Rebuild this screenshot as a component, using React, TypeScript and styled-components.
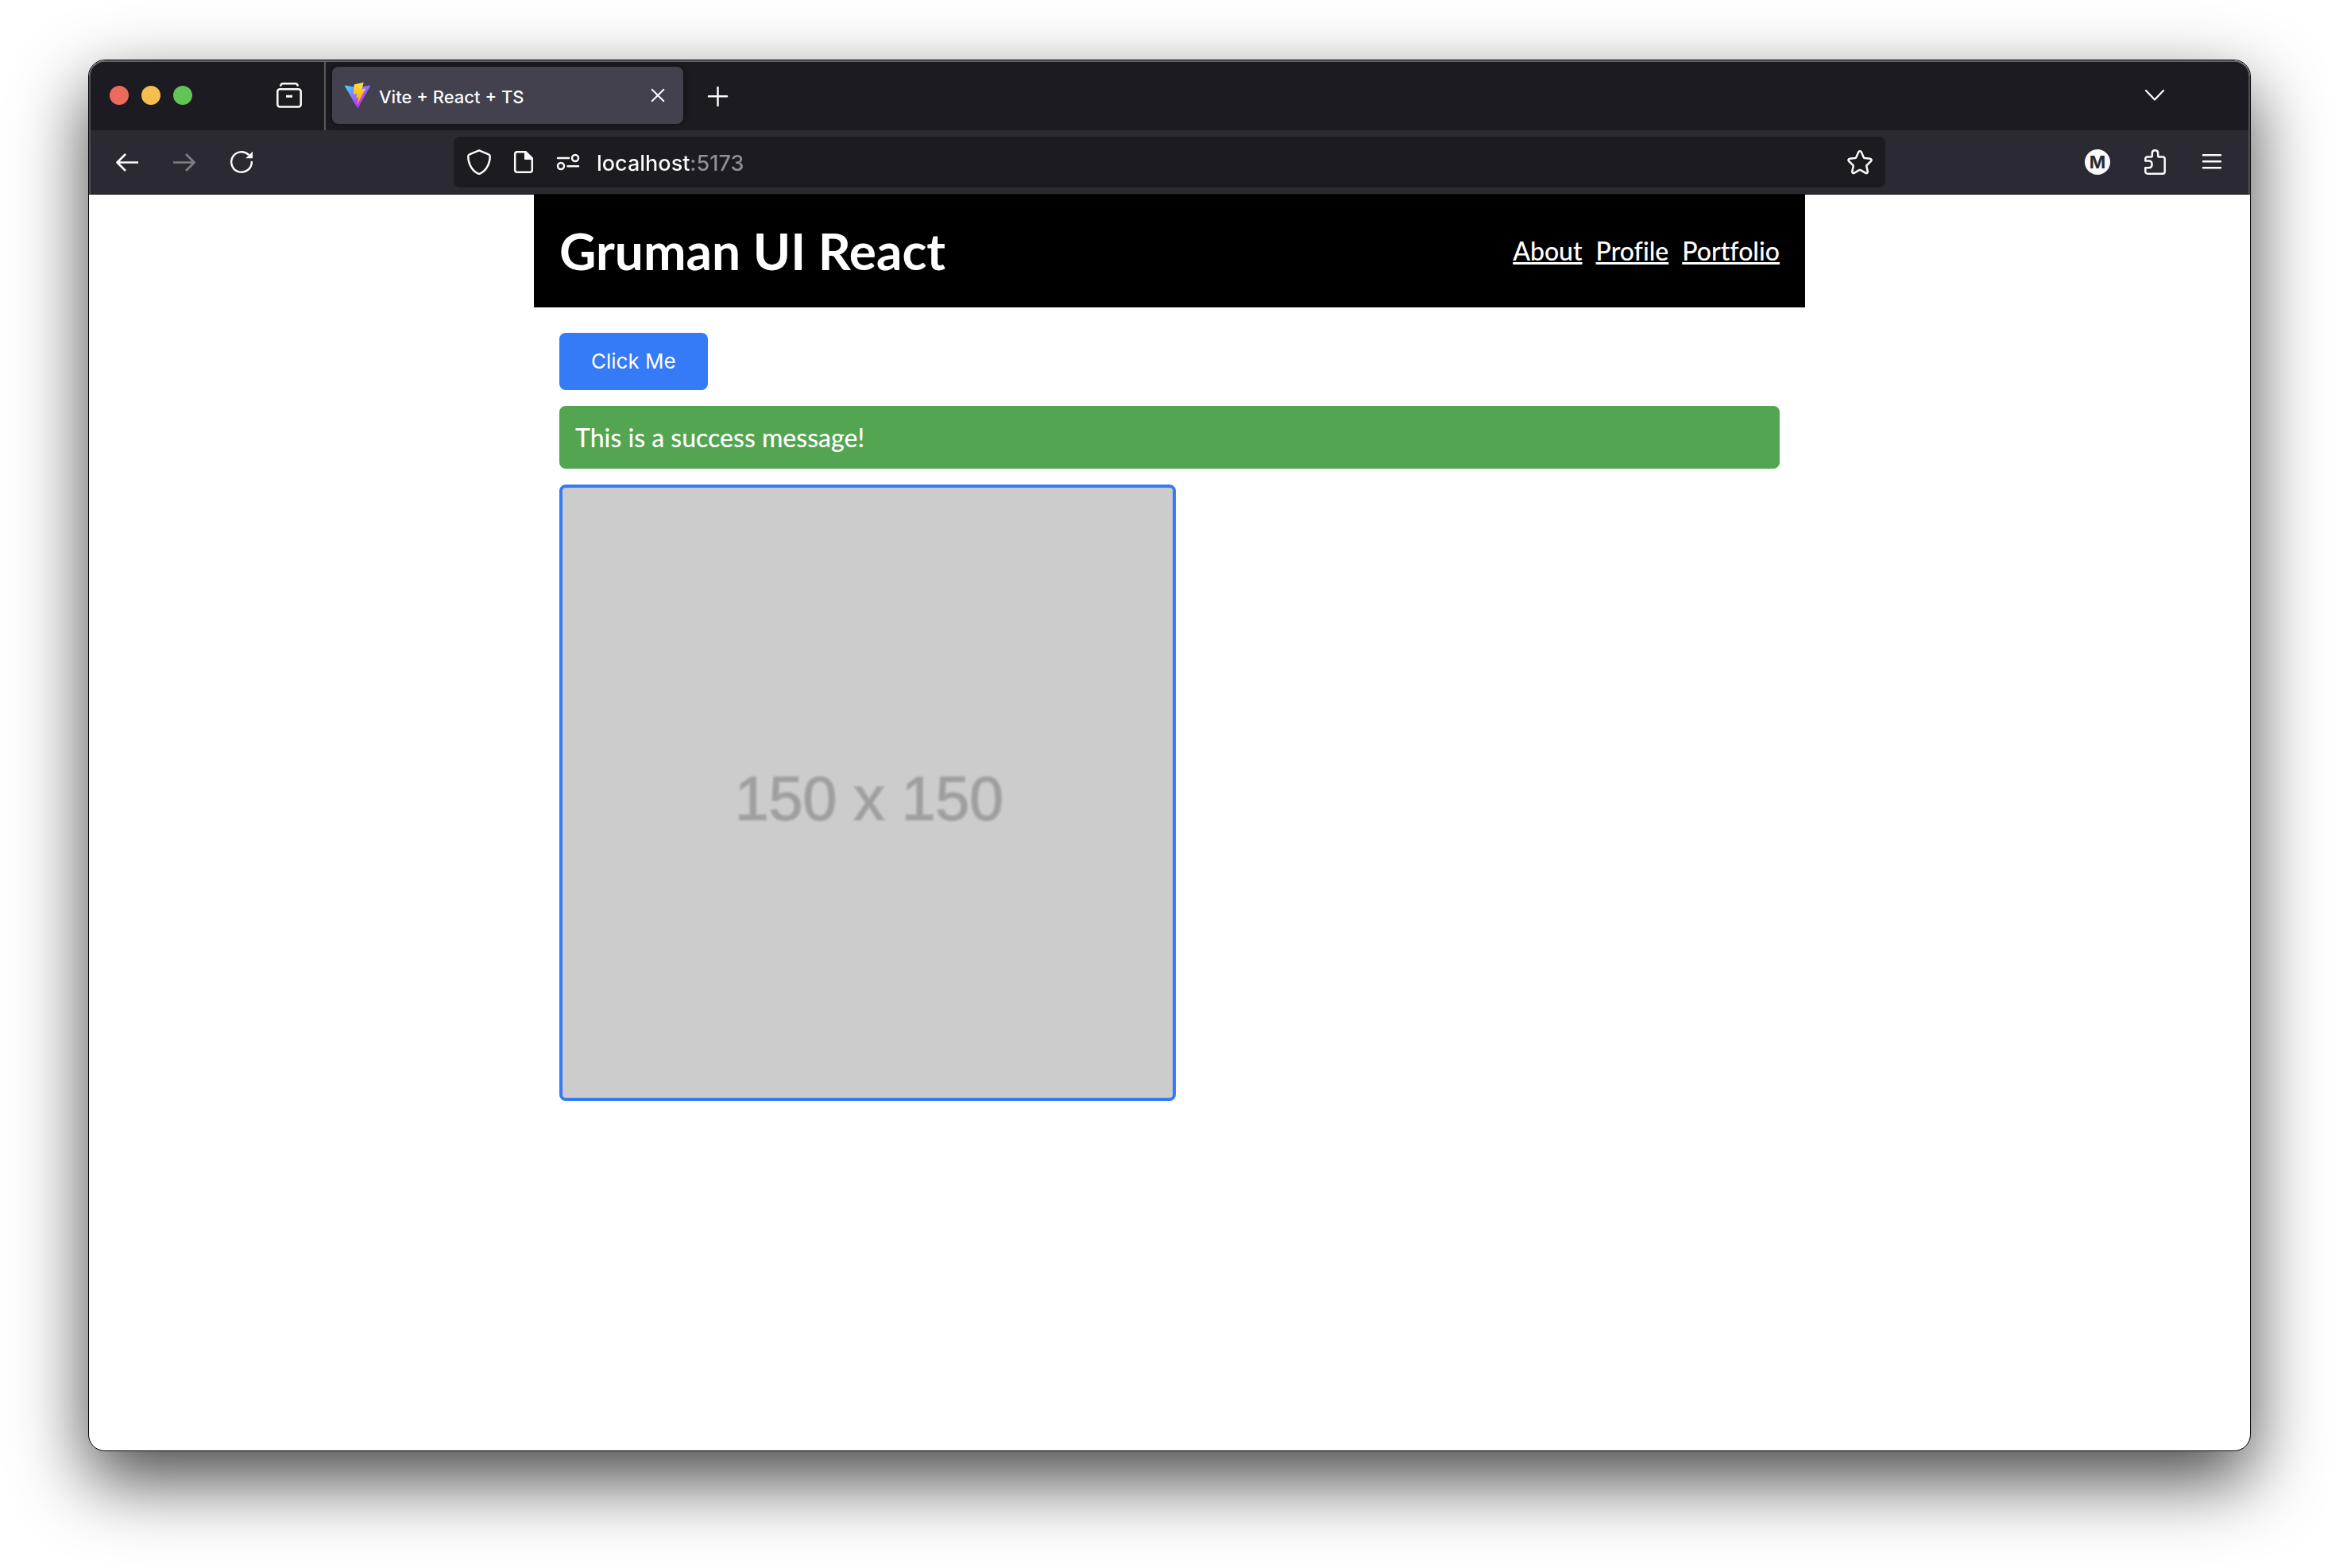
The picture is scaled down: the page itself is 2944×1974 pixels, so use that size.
import React from "react";
import styled, { createGlobalStyle } from "styled-components";

const colors = {
  frame: "#1c1b22",
  toolbar: "#2b2a33",
  tab: "#42414d",
  icon: "#fbfbfe",
  muted: "#8f8f94",
  blue: "#357af6",
  green: "#53a551",
};

const uiFont = `Inter, "Liberation Sans", sans-serif`;

const GlobalStyle = createGlobalStyle`
  *, *::before, *::after { box-sizing: border-box; }
  body { margin: 0; background: #fff; font-family: Lato, "Liberation Sans", sans-serif; }
`;

const Desktop = styled.div`
  min-height: 100vh;
  padding: 75px 111px 147px;
  display: flex;
  flex-direction: column;
`;

const Window = styled.div`
  flex: 1;
  display: flex;
  flex-direction: column;
  overflow: hidden;
  background: #fff;
  border: 1px solid #000;
  border-radius: 21px;
  box-shadow: 0 36px 90px rgba(0, 0, 0, 0.72);
`;

const Chrome = styled.header`
  background: ${colors.toolbar};
  border-style: solid;
  border-width: 2px 2px 1px;
  border-color: #67676b #4f4e54 #0c0c0d;
  border-radius: 20px 20px 0 0;
  font-family: ${uiFont};
  color: ${colors.icon};
`;

const TabStrip = styled.div`
  display: flex;
  align-items: center;
  height: 86px;
  padding: 0 82px 2px 24px;
  background: ${colors.frame};
  border-radius: 18px 18px 0 0;
`;

const WindowControls = styled.div`
  display: flex;
  gap: 16px;
  margin-right: 86px;
`;

const WindowControl = styled.button<{ $color: string }>`
  width: 24px;
  height: 24px;
  padding: 0;
  border: 0;
  border-radius: 50%;
  background: ${(p) => p.$color};
`;

const IconButton = styled.button<{ $width?: number }>`
  display: flex;
  align-items: center;
  justify-content: center;
  flex: none;
  width: ${(p) => p.$width ?? 72}px;
  height: 64px;
  padding: 0;
  border: 0;
  background: transparent;
  color: ${colors.icon};

  &:disabled {
    color: #807f85;
  }
`;

const Divider = styled.div`
  align-self: stretch;
  width: 2px;
  margin: 0 8px -2px;
  background: #5a5960;
`;

const Tab = styled.div`
  display: flex;
  align-items: center;
  width: 442px;
  height: 72px;
  margin-right: 8px;
  padding: 0 4px 0 16px;
  border-radius: 8px;
  background: ${colors.tab};
  box-shadow: 0 0 8px rgba(0, 0, 0, 0.5);
`;

const TabTitle = styled.span`
  flex: 1;
  padding: 4px 0 0 11px;
  font-size: 22px;
  font-weight: 500;
  line-height: 32px;
`;

const Spacer = styled.div`
  flex: 1;
`;

const Toolbar = styled.div`
  display: grid;
  grid-template-columns: 457px 1fr 457px;
  align-items: center;
  height: 80px;
`;

const ToolbarGroup = styled.div<{ $end?: boolean }>`
  display: flex;
  justify-content: ${(p) => (p.$end ? "flex-end" : "flex-start")};
  padding: 0 10px;
`;

const AddressBar = styled.div`
  display: flex;
  align-items: center;
  height: 64px;
  padding: 0 4px;
  border-radius: 8px;
  background: ${colors.frame};
`;

/* The host is bright and the port is dimmed inside the same text box. */
const AddressInput = styled.input`
  flex: 1;
  min-width: 0;
  height: 40px;
  padding: 0;
  margin: 2px 0 0 8px;
  border: 0;
  outline: 0;
  font-family: ${uiFont};
  font-size: 27px;
  font-weight: 500;
  color: ${colors.icon};
  background: linear-gradient(90deg, ${colors.icon} 117px, ${colors.muted} 117px);
  background-clip: text;
  -webkit-text-fill-color: transparent;
`;

const Avatar = styled.span`
  width: 32px;
  height: 32px;
  border-radius: 50%;
  background: ${colors.icon};
  color: ${colors.toolbar};
  font-family: ${uiFont};
  font-size: 22px;
  font-weight: 700;
  line-height: 32px;
  text-align: center;
`;

const Container = styled.div`
  width: 100%;
  max-width: 1600px;
  margin: 0 auto;
`;

const SiteHeader = styled.div`
  display: flex;
  align-items: center;
  justify-content: space-between;
  padding: 32px;
  background: #000;
  color: #fff;
`;

const SiteTitle = styled.h1`
  margin: 0;
  font-size: 64px;
  font-weight: 700;
  line-height: 78px;
`;

const SiteNav = styled.nav`
  display: flex;
  gap: 17px;
`;

const NavLink = styled.a`
  color: #fff;
  font-size: 32px;
  line-height: 40px;
  font-weight: 500;
  font-variant-ligatures: none;
`;

const Main = styled.main`
  display: flex;
  flex-direction: column;
  align-items: flex-start;
  gap: 20px;
  padding: 32px;
`;

const PrimaryButton = styled.button`
  padding: 20px 40px;
  border: 0;
  border-radius: 8px;
  background: ${colors.blue};
  color: #fff;
  font-family: ${uiFont};
  font-size: 26px;
  line-height: 32px;
`;

const Alert = styled.div`
  align-self: stretch;
  padding: 20px;
  border-radius: 8px;
  background: ${colors.green};
  color: #fff;
  font-size: 32px;
  font-weight: 500;
  line-height: 39px;
`;

const Placeholder = styled.div`
  display: flex;
  align-items: center;
  justify-content: center;
  width: 776px;
  aspect-ratio: 1;
  padding: 14px 0 0 4px;
  border: 4px solid ${colors.blue};
  border-radius: 8px;
  background: #ccc;
  color: #9e9e9e;
  font-family: "Liberation Sans", Arial, sans-serif;
  font-size: 77px;
`;

const SoftText = styled.span`
  filter: blur(1px);
  -webkit-text-stroke: 2px #a8a8a8;
`;

type IconProps = { children: React.ReactNode; size?: number };

/* Toolbar glyphs are drawn on a 32 unit grid. */
const Icon = ({ children, size = 32 }: IconProps) => (
  <svg
    width={size}
    height={size}
    viewBox="0 0 32 32"
    fill="none"
    stroke="currentColor"
    strokeWidth="2.5"
    strokeLinecap="round"
    strokeLinejoin="round"
    aria-hidden="true"
  >
    {children}
  </svg>
);

const ViteLogo = () => (
  <svg width="32" height="32" viewBox="0 0 256 257" aria-hidden="true">
    <defs>
      <linearGradient id="viteBody" x1="-.828%" x2="57.636%" y1="7.652%" y2="78.411%">
        <stop offset="0%" stopColor="#41D1FF" />
        <stop offset="100%" stopColor="#BD34FE" />
      </linearGradient>
      <linearGradient id="viteBolt" x1="43.376%" x2="50.316%" y1="2.242%" y2="89.03%">
        <stop offset="0%" stopColor="#FFEA83" />
        <stop offset="8.333%" stopColor="#FFDD35" />
        <stop offset="100%" stopColor="#FFA800" />
      </linearGradient>
    </defs>
    <path
      fill="url(#viteBody)"
      d="M255.153 37.938L134.897 252.976c-2.483 4.44-8.862 4.466-11.382.048L.875 37.958c-2.746-4.814 1.371-10.646 6.827-9.67l120.385 21.517a6.537 6.537 0 0 0 2.322-.004l117.867-21.483c5.438-.991 9.574 4.796 6.877 9.62Z"
    />
    <path
      fill="url(#viteBolt)"
      d="M185.432.063L96.44 17.501a3.268 3.268 0 0 0-2.634 3.014l-5.474 92.456a3.268 3.268 0 0 0 3.997 3.378l24.777-5.718c2.318-.535 4.413 1.507 3.936 3.838l-7.361 36.047c-.495 2.426 1.782 4.5 4.151 3.78l15.304-4.649c2.372-.72 4.652 1.36 4.15 3.788l-11.698 56.621c-.732 3.542 3.979 5.473 5.943 2.437l1.313-2.028l72.516-144.72c1.215-2.423-.88-5.186-3.54-4.672l-25.505 4.922c-2.396.462-4.435-1.77-3.759-4.114l16.646-57.705c.677-2.35-1.37-4.583-3.769-4.113Z"
    />
  </svg>
);

const BrowserChrome = () => (
  <Chrome>
    <TabStrip>
      <WindowControls>
        <WindowControl $color="#ed6a5e" aria-label="Close window" />
        <WindowControl $color="#f5bf4f" aria-label="Minimize window" />
        <WindowControl $color="#61c554" aria-label="Zoom window" />
      </WindowControls>
      <IconButton aria-label="View recent browsing">
        <Icon>
          <path d="M5.3 3.5C5.8 2.2 6.5 1.3 8 1.3h16c1.5 0 2.2 .9 2.7 2.2" />
          <rect x="1.3" y="8.3" width="29.4" height="22.2" rx="3" />
          <path d="M12 17.3h8" strokeWidth="3" strokeLinecap="butt" />
        </Icon>
      </IconButton>
      <Divider />
      <Tab>
        <ViteLogo />
        <TabTitle>Vite + React + TS</TabTitle>
        <IconButton $width={56} aria-label="Close tab">
          <Icon>
            <path d="M8.7 8.7l14.6 14.6M23.3 8.7L8.7 23.3" strokeWidth="2" />
          </Icon>
        </IconButton>
      </Tab>
      <IconButton aria-label="New tab">
        <Icon>
          <path d="M15.5 6v23M4 17.3h23" />
        </Icon>
      </IconButton>
      <Spacer />
      <IconButton aria-label="List all tabs">
        <Icon>
          <path d="M5 10l11 11.5L27 10" strokeWidth="2.3" />
        </Icon>
      </IconButton>
    </TabStrip>
    <Toolbar>
      <ToolbarGroup>
        <IconButton aria-label="Back">
          <Icon>
            <path d="M30 16.5H3.5M14 6L3.5 16.5 14 27" strokeWidth="2.7" strokeLinecap="butt" />
          </Icon>
        </IconButton>
        <IconButton aria-label="Forward" disabled>
          <Icon>
            <path d="M2 16.5h26.5M18 6l10.5 10.5L18 27" strokeWidth="2.7" strokeLinecap="butt" />
          </Icon>
        </IconButton>
        <IconButton aria-label="Reload">
          <Icon>
            <path d="M28.8 16A12.8 12.8 0 1 1 24.6 6.5" />
            <path d="M30 2.8v8.4H21.2z" fill="currentColor" stroke="none" />
          </Icon>
        </IconButton>
      </ToolbarGroup>
      <AddressBar>
        <IconButton $width={56} aria-label="Tracking protection">
          <Icon>
            <path d="M16 1.3L28 6.3c1.2 .5 1.7 1.3 1.7 2.5C29.7 19 24 27.5 17.5 30.3c-1 .5-2 .5-3 0C8 27.5 2.3 19 2.3 8.8c0-1.2 .5-2 1.7-2.5z" />
          </Icon>
        </IconButton>
        <IconButton $width={56} aria-label="Page information">
          <Icon>
            <path d="M18.5 3.2H8c-1.7 0-2.8 1.1-2.8 2.8v20c0 1.7 1.1 2.8 2.8 2.8h16c1.7 0 2.8-1.1 2.8-2.8V11.5z" />
            <path d="M18 3l9 9h-9z" fill="currentColor" strokeWidth="2" />
          </Icon>
        </IconButton>
        <IconButton $width={56} aria-label="Site permissions">
          <Icon>
            <path d="M3 11h14M15.5 21.3h13.5" />
            <circle cx="25" cy="11" r="4" />
            <circle cx="7" cy="21" r="4" />
          </Icon>
        </IconButton>
        <AddressInput aria-label="Address" defaultValue="localhost:5173" spellCheck={false} />
        <IconButton $width={56} aria-label="Bookmark this page">
          <Icon>
            <path d="M14.3 3.3c.7-1.5 2.7-1.5 3.4 0l3 6.7c.2 .5 .7 .9 1.3 1l6.7 .7c1.9 .2 2.4 2.1 1.1 3.3l-5 4.8c-.5 .4-.6 1-.5 1.5l1.4 6.3c.4 1.9-1.2 2.9-2.8 2l-6-3.4c-.6-.3-1.2-.3-1.8 0l-6 3.4c-1.6 .9-3.2-.1-2.8-2l1.4-6.3c.1-.5 0-1.1-.5-1.5l-5-4.8C.9 13.8 1.4 11.9 3.3 11.7l6.7-.7c.6-.1 1.1-.5 1.3-1z" />
          </Icon>
        </IconButton>
      </AddressBar>
      <ToolbarGroup $end>
        <IconButton aria-label="Account">
          <Avatar>M</Avatar>
        </IconButton>
        <IconButton aria-label="Extensions">
          <Icon>
            <path d="M4.3 14.5V12c0-1.5 1.2-2.6 2.7-2.6h4.8c.8 0 1-.4 1-1V5c0-2.2 1.5-3.7 3.7-3.7s3.7 1.5 3.7 3.7v3.4c0 .6 .3 1 1 1h4.8c1.5 0 2.7 1.1 2.7 2.6v16c0 1.5-1.2 2.7-2.7 2.7H7c-1.5 0-2.7-1.2-2.7-2.7v-4.8h4c2.7 0 4.3-1.7 4.3-4.3s-1.6-4.4-4.3-4.4z" />
          </Icon>
        </IconButton>
        <IconButton aria-label="Open menu">
          <Icon>
            <path d="M5 7.3h22M5 15.3h22M5 23.3h22" />
          </Icon>
        </IconButton>
      </ToolbarGroup>
    </Toolbar>
  </Chrome>
);

const links = ["About", "Profile", "Portfolio"];

export default function App() {
  return (
    <>
      <GlobalStyle />
      <Desktop>
        <Window>
          <BrowserChrome />
          <Container>
            <SiteHeader>
              <SiteTitle>Gruman UI React</SiteTitle>
              <SiteNav>
                {links.map((label) => (
                  <NavLink key={label} href={`#${label.toLowerCase()}`}>
                    {label}
                  </NavLink>
                ))}
              </SiteNav>
            </SiteHeader>
            <Main>
              <PrimaryButton>Click Me</PrimaryButton>
              <Alert role="status">This is a success message!</Alert>
              <Placeholder>
                <SoftText>150 x 150</SoftText>
              </Placeholder>
            </Main>
          </Container>
        </Window>
      </Desktop>
    </>
  );
}
